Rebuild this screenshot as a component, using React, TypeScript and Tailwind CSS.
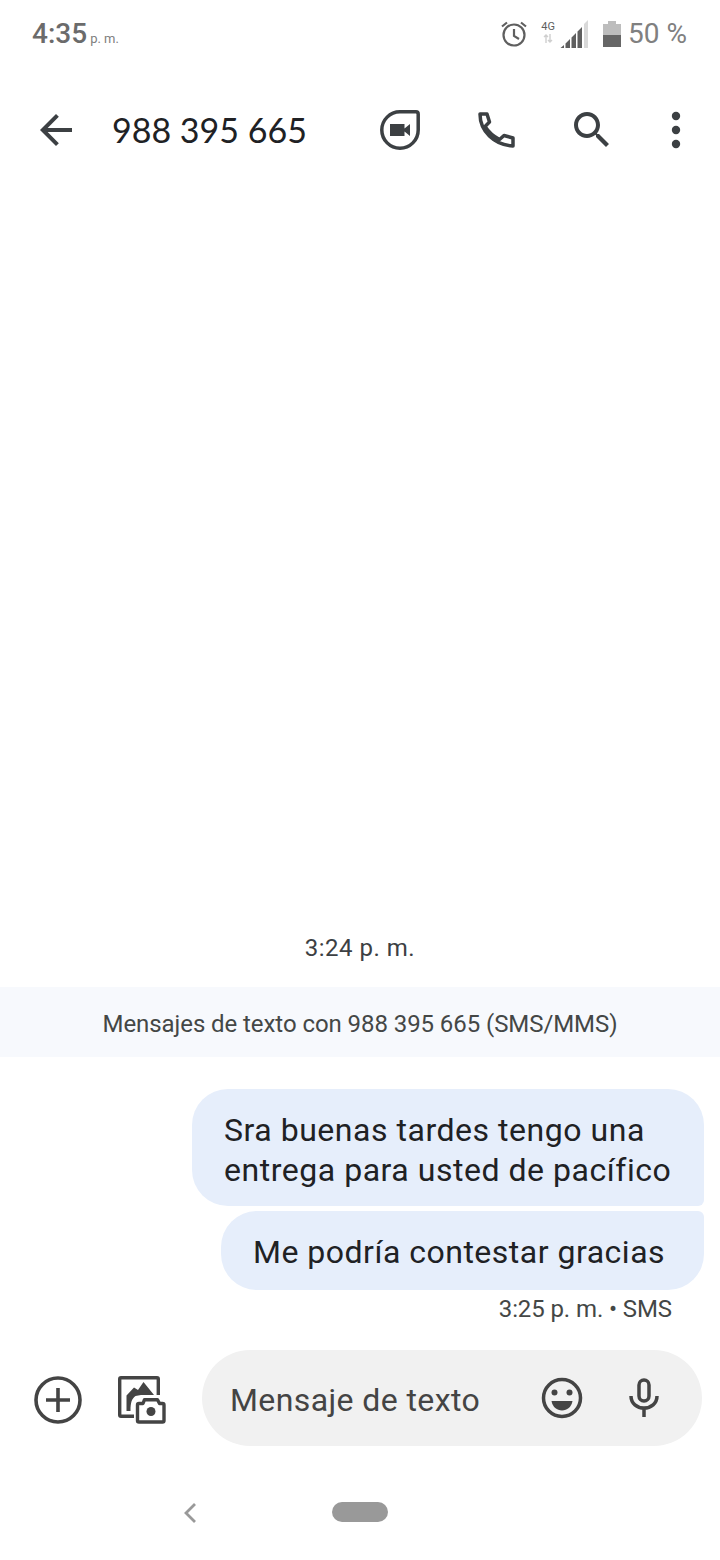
import React from "react";

const Alarm = () => (
  <svg width="28" height="28" viewBox="0 0 28 28" fill="none" stroke="#5f5f5f" strokeWidth="2.2">
    <circle cx="14" cy="15" r="10.500" />
    <path d="M14 9v7l5 3M2 6.500 7 2.500M26 6.500 21 2.500" />
  </svg>
);

const Arrows = () => (
  <svg width="10" height="9" viewBox="0 0 10 9" fill="none" stroke="#cfcfcf" strokeWidth="1.400">
    <path d="M3 9V1M1 3l2-2 2 2M7 0v8M5 6l2 2 2-2" />
  </svg>
);

const Signal = () => (
  <svg width="30" height="28" viewBox="0 0 30 28">
    <path d="M29 0v28h-4V4z" fill="#d9d9d9" />
    <path d="M23 7v21h-4.500V11.500zM17 13v15h-4.500V17.500zM11 19v9H6.500v-4.500zM5 25v3H1.500z" fill="#5f5f5f" />
  </svg>
);

const Battery = () => (
  <div className="flex flex-col items-center w-[18px] h-[26px]">
    <div className="w-[8px] h-[3px] bg-[#bdbdbd]" />
    <div className="w-[18px] h-[11px] bg-[#bdbdbd]" />
    <div className="w-[18px] h-[12px] bg-[#666666]" />
  </div>
);

const Back = () => (
  <svg width="48" height="48" viewBox="0 0 24 24" fill="#3c4043">
    <path d="M20 11H7.830l5.590-5.590L12 4l-8 8 8 8 1.410-1.410L7.830 13H20v-2z" />
  </svg>
);

const Duo = () => (
  <svg width="40" height="40" viewBox="0 0 40 40" fill="none">
    <path d="M20 1.800h16a2.200 2.200 0 0 1 2.200 2.200v16A18.200 18.200 0 1 1 20 1.800z" stroke="#3c4043" strokeWidth="3.500" />
    <path d="M10 14h14.500v4.500l5.500-4.500v12l-5.500-4.500V26H10z" fill="#3c4043" />
  </svg>
);

const Phone = () => (
  <svg width="40" height="40" viewBox="6 4 40 40" fill="none" stroke="#3c4043" strokeWidth="3.500" strokeLinejoin="round">
    <path d="M10 8H17L19.500 16L15 20.500C18.500 26 23.500 30.500 29.500 33.500L34 29.500L43 32V40C24 39 10 25 10 8Z" />
  </svg>
);

const Search = () => (
  <svg width="48" height="48" viewBox="0 0 24 24" fill="#3c4043">
    <path d="M15.500 14h-.790l-.280-.270C15.410 12.590 16 11.110 16 9.500 16 5.910 13.090 3 9.500 3S3 5.910 3 9.500 5.910 16 9.500 16c1.610 0 3.090-.590 4.230-1.570l.270.280v.790l5 4.990L20.490 19l-4.990-5zm-6 0C7.010 14 5 11.990 5 9.500S7.010 5 9.500 5 14 7.010 14 9.500 11.990 14 9.500 14z" />
  </svg>
);

const Dots = () => (
  <svg width="12" height="40" viewBox="0 0 12 40" fill="#3c4043">
    <circle cx="6" cy="6" r="4.200" />
    <circle cx="6" cy="20" r="4.200" />
    <circle cx="6" cy="34" r="4.200" />
  </svg>
);

const Plus = () => (
  <svg width="48" height="48" viewBox="0 0 48 48" fill="none" stroke="#444444" strokeWidth="3.600">
    <circle cx="24" cy="24" r="22" />
    <path d="M24 12v24M12 24h24" />
  </svg>
);

const Gallery = () => (
  <svg width="48" height="48" viewBox="8 8 48 48" fill="none">
    <path d="M24 48.300H11a1.300 1.300 0 0 1-1.300-1.300V11A1.300 1.300 0 0 1 11 9.700h36a1.300 1.300 0 0 1 1.300 1.300v16" stroke="#444444" strokeWidth="3.400" />
    <path d="M16.500 43V27.500L24 19.500L28 22L33.500 14L44 27H31L25.500 28C22 30.500 20.500 34 20.500 43Z" fill="#444444" />
    <path d="M29 54a1.500 1.500 0 0 1-1.500-1.500V37a1.500 1.500 0 0 1 1.500-1.500h4l1.500-3.800h13l2 3.800h3a1.500 1.500 0 0 1 1.500 1.500v15.500a1.500 1.500 0 0 1-1.500 1.500z" fill="#ffffff" stroke="#444444" strokeWidth="3.400" strokeLinejoin="round" />
    <circle cx="41" cy="43.500" r="4.500" fill="#444444" />
  </svg>
);

const Emoji = () => (
  <svg width="42" height="42" viewBox="0 0 42 42" fill="none">
    <circle cx="21" cy="21" r="18.500" stroke="#444444" strokeWidth="3.500" />
    <circle cx="13.500" cy="15.500" r="3" fill="#444444" />
    <circle cx="28.500" cy="15.500" r="3" fill="#444444" />
    <path d="M10.500 24h21c-1 6-5.500 9.500-10.500 9.500S11.500 30 10.500 24z" fill="#444444" />
  </svg>
);

const Mic = () => (
  <svg width="30" height="40" viewBox="0 0 30 40" fill="none" stroke="#444444" strokeWidth="3.500">
    <rect x="10" y="2" width="10" height="21" rx="5" />
    <path d="M2 18c0 7.500 6 12 13 12s13-4.500 13-12M15 30v9" />
  </svg>
);

const Chevron = () => (
  <svg width="14" height="22" viewBox="0 0 14 22" fill="none" stroke="#999999" strokeWidth="2.800">
    <path d="M12 2 3 11l9 9" />
  </svg>
);

export default function App() {
  return (
    <div className="w-[720px] h-[1560px] bg-white flex flex-col overflow-hidden font-['Roboto',sans-serif]">
      <div className="h-[68px] flex items-center pl-[32px] pr-[33px] pb-[1px]">
        <span className="text-[28px] font-medium text-[#6b6b6b] leading-none">4:35</span>
        <span className="text-[13px] text-[#808080] ml-[3px] mt-[9px] leading-none">p. m.</span>
        <div className="ml-auto flex items-center">
          <Alarm />
          <div className="flex flex-col items-center ml-[12px] w-[16px] mb-[4px] gap-[2px]">
            <span className="text-[11px] text-[#5f5f5f] leading-[11px]">4G</span>
            <Arrows />
          </div>
          <div className="ml-[3px]"><Signal /></div>
          <div className="ml-[14px]"><Battery /></div>
          <span className="text-[28px] text-[#808080] leading-none ml-[7px]">50 %</span>
        </div>
      </div>

      <div className="h-[124px] flex items-center pl-[32px]">
        <Back />
        <span className="ml-[32px] text-[34px] text-[#202124] font-['Lato',sans-serif] leading-none w-[268px]">988 395 665</span>
        <Duo />
        <div className="ml-[56px]"><Phone /></div>
        <div className="ml-[52px]"><Search /></div>
        <div className="ml-[54px]"><Dots /></div>
      </div>

      <div className="flex-1" />

      <div className="h-[40px] flex items-center justify-center text-[24px] text-[#3c4043] mb-[19px] tracking-[0.5px]">3:24 p. m.</div>

      <div className="h-[70px] bg-[#f7f9fd] flex items-center justify-center pt-[3px] text-[24px] text-[#444746] tracking-[-0.07px]">
        Mensajes de texto con 988 395 665 (SMS/MMS)
      </div>

      <div className="flex flex-col items-end pr-[16px] pt-[32px]">
        <div className="w-[512px] h-[117px] bg-[#e6eefb] rounded-[36px] rounded-br-[6px] pl-[32px] pt-[21px] text-[32px] leading-[40px] text-[#202124] tracking-[0.53px]">
          Sra buenas tardes tengo una<br />entrega para usted de pacífico
        </div>
        <div className="mt-[5px] w-[483px] h-[79px] bg-[#e6eefb] rounded-[36px] rounded-tr-[6px] pl-[32px] pt-[2px] flex items-center text-[32px] text-[#202124] tracking-[0.5px]">
          Me podría contestar gracias
        </div>
        <div className="h-[38px] flex items-center pr-[32px] text-[24px] text-[#444746] tracking-[-0.1px]">3:25 p. m. • SMS</div>
      </div>

      <div className="mt-[22px] h-[96px] flex items-center pl-[34px]">
        <div className="mt-[4px]"><Plus /></div>
        <div className="ml-[36px] mt-[4px]"><Gallery /></div>
        <div className="ml-[36px] w-[500px] h-[96px] bg-[#f1f1f1] rounded-[48px] flex items-center pl-[28px]">
          <span className="text-[32px] text-[#444444] tracking-[0.4px] mt-[4px] w-[311px]">Mensaje de texto</span>
          <Emoji />
          <div className="ml-[46px]"><Mic /></div>
        </div>
      </div>

      <div className="h-[114px] flex items-start pt-[56px] pl-[183px]">
        <Chevron />
        <div className="ml-[135px] w-[56px] h-[20px] rounded-full bg-[#999999]" />
      </div>
    </div>
  );
}
